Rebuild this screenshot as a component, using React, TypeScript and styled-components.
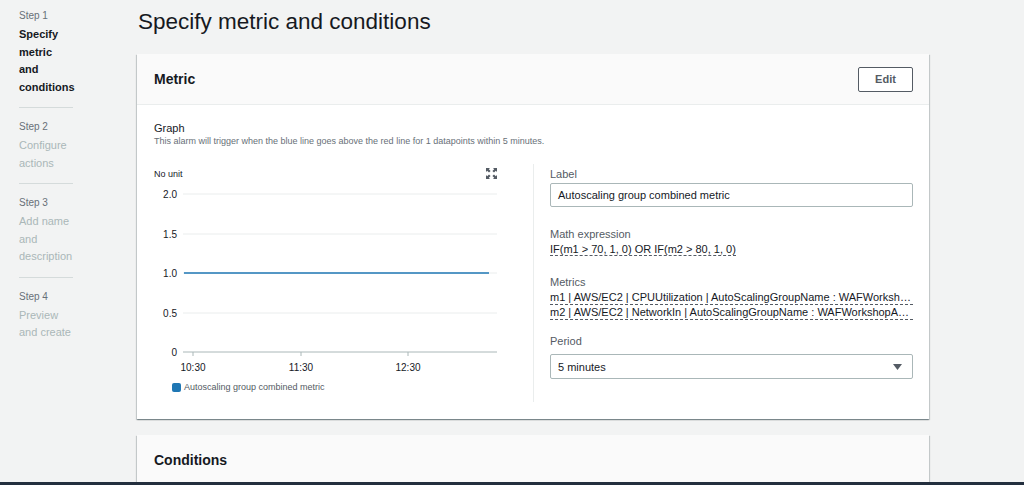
import styled, { createGlobalStyle } from 'styled-components';

const GlobalStyle = createGlobalStyle`
  html, body {
    margin: 0;
    padding: 0;
    background: #f2f3f3;
    font-family: "Liberation Sans", Arial, sans-serif;
    color: #16191f;
    overflow: hidden;
  }
`;

const Page = styled.div`
  display: flex;
  min-height: 485px;
`;

const Sidebar = styled.nav`
  width: 137px;
  flex-shrink: 0;
  box-sizing: border-box;
  padding: 9px 64px 0 19px;
`;

interface StepProps {
  $active?: boolean;
}

const StepItem = styled.div`
  padding: 0 0 11px;
  border-bottom: 1px solid #d5dbdb;
  margin-bottom: 12px;

  &:last-child {
    border-bottom: none;
  }
`;

const StepLabel = styled.div`
  font-size: 10px;
  line-height: 14px;
  color: #687078;
  margin-bottom: 3px;
`;

const StepTitle = styled.div<StepProps>`
  font-size: 11px;
  line-height: 17.5px;
  font-weight: ${props => (props.$active ? 700 : 400)};
  color: ${props => (props.$active ? '#16191f' : '#aab7b8')};
`;

const Main = styled.main`
  width: 792px;
  padding-top: 8px;
`;

const PageTitle = styled.h1`
  margin: 0 0 18px 1px;
  font-size: 22.5px;
  line-height: 28px;
  font-weight: 400;
  color: #16191f;
`;

const Card = styled.section`
  background: #fff;
  box-shadow: 0 1px 1px 0 rgba(0, 28, 36, 0.3), 1px 1px 1px 0 rgba(0, 28, 36, 0.15),
    -1px 1px 1px 0 rgba(0, 28, 36, 0.15);
  margin-bottom: 16px;
`;

const CardHeader = styled.header`
  display: flex;
  align-items: center;
  justify-content: space-between;
  height: 50px;
  padding: 0 16px 0 17px;
  background: #fafafa;
  border-bottom: 1px solid #eaeded;
`;

const CardTitle = styled.h2`
  margin: 0;
  font-size: 14px;
  font-weight: 700;
  color: #16191f;
`;

const EditButton = styled.button`
  width: 55px;
  height: 25px;
  border: 1px solid #545b64;
  border-radius: 2px;
  background: #fff;
  font-family: inherit;
  font-size: 11px;
  font-weight: 700;
  color: #545b64;
`;

const CardBody = styled.div`
  padding: 16px 16px 17px 17px;
`;

const SectionLabel = styled.div`
  font-size: 11px;
  line-height: 14px;
  color: #16191f;
`;

const SectionHint = styled.div`
  font-size: 9px;
  line-height: 13px;
  color: #687078;
`;

const Columns = styled.div`
  display: grid;
  grid-template-columns: minmax(0, 1fr) 1px minmax(0, 1fr);
  margin-top: 16px;
`;

const Divider = styled.div`
  background: #eaeded;
`;

const GraphColumn = styled.div`
  padding-right: 16px;
  padding-bottom: 10px;
`;

const GraphTop = styled.div`
  display: flex;
  align-items: center;
  justify-content: space-between;
  padding: 4px 20px 0 0;
  margin-bottom: 5px;
  font-size: 9px;
  color: #16191f;
`;

const Legend = styled.div`
  display: flex;
  align-items: center;
  gap: 3px;
  margin: 6px 0 0 18px;
  font-size: 9px;
  color: #545b64;
`;

const LegendSwatch = styled.span`
  width: 9px;
  height: 9px;
  border-radius: 2px;
  background: #1f77b4;
`;

const FieldsColumn = styled.div`
  padding-left: 16px;
`;

interface FieldProps {
  $gap?: number;
}

const Field = styled.div<FieldProps>`
  display: flow-root;
  padding-bottom: ${props => props.$gap ?? 15}px;
`;

const FieldLabel = styled.div`
  font-size: 11px;
  line-height: 14px;
  color: #545b64;
  margin: 3px 0 1px;
`;

const TextInput = styled.div`
  height: 24px;
  margin-top: 2px;
  box-sizing: border-box;
  border: 1px solid #aab7b8;
  border-radius: 2px;
  padding: 0 7px;
  display: flex;
  align-items: center;
  font-size: 11px;
  color: #16191f;
`;

const Select = styled(TextInput)`
  height: 25px;
  margin-top: 6px;
  justify-content: space-between;
  padding-right: 10px;
`;

const DottedValue = styled.div`
  font-size: 11px;
  line-height: 15px;
  color: #16191f;
  white-space: nowrap;
  overflow: hidden;
  text-overflow: ellipsis;

  span {
    border-bottom: 1px dashed #545b64;
  }
`;

const MetricLine = styled(DottedValue)`
  border-bottom: 1px dashed #545b64;
  line-height: 14px;
`;

const BottomBar = styled.div`
  position: fixed;
  left: 0;
  right: 0;
  bottom: 0;
  height: 3px;
  background: #232f3e;
`;

const steps = [
  { label: 'Step 1', title: 'Specify metric and conditions', active: true },
  { label: 'Step 2', title: 'Configure actions' },
  { label: 'Step 3', title: 'Add name and description' },
  { label: 'Step 4', title: 'Preview and create' },
];

const yTicks = [
  { label: '2.0', y: 10 },
  { label: '1.5', y: 50 },
  { label: '1.0', y: 89 },
  { label: '0.5', y: 129 },
  { label: '0', y: 168 },
];

const xTicks = [
  { label: '10:30', x: 39 },
  { label: '11:30', x: 147 },
  { label: '12:30', x: 254 },
];

function ExpandIcon(): JSX.Element {
  return (
    <svg width="11" height="11" viewBox="0 0 11 11" fill="#545b64">
      <path d="M0 0h4L2.8 1.2 4.6 3 3 4.6 1.2 2.8 0 4z" />
      <path d="M11 0v4L9.8 2.8 8 4.6 6.4 3 8.2 1.2 7 0z" />
      <path d="M0 11V7l1.2 1.2L3 6.4 4.6 8 2.8 9.8 4 11z" />
      <path d="M11 11H7l1.2-1.2L6.4 8 8 6.4l1.8 1.8L11 7z" />
    </svg>
  );
}

function Chart(): JSX.Element {
  return (
    <svg width="350" height="192" viewBox="0 0 350 192" style={{ display: 'block' }}>
      {yTicks.map(t => (
        <g key={t.label}>
          <line x1="29" x2="343" y1={t.y} y2={t.y} stroke={t.y === 168 ? '#aab7b8' : '#eaeded'} strokeWidth="1" />
          <text x="23" y={t.y + 3.5} fontSize="10" textAnchor="end" fill="#16191f" fontFamily="Liberation Sans, Arial, sans-serif">
            {t.label}
          </text>
        </g>
      ))}
      <line x1="30" x2="335" y1="89" y2="89" stroke="#1f77b4" strokeWidth="1.3" />
      {xTicks.map(t => (
        <g key={t.label}>
          <line x1={t.x} x2={t.x} y1="168" y2="172" stroke="#aab7b8" />
          <text x={t.x} y="187" fontSize="10" textAnchor="middle" fill="#16191f" fontFamily="Liberation Sans, Arial, sans-serif">
            {t.label}
          </text>
        </g>
      ))}
    </svg>
  );
}

function App(): JSX.Element {
  return (
    <>
      <GlobalStyle />
      <Page>
        <Sidebar>
          {steps.map(step => (
            <StepItem key={step.label}>
              <StepLabel>{step.label}</StepLabel>
              <StepTitle $active={step.active}>{step.title}</StepTitle>
            </StepItem>
          ))}
        </Sidebar>
        <Main>
          <PageTitle>Specify metric and conditions</PageTitle>
          <Card>
            <CardHeader>
              <CardTitle>Metric</CardTitle>
              <EditButton>Edit</EditButton>
            </CardHeader>
            <CardBody>
              <SectionLabel>Graph</SectionLabel>
              <SectionHint>
                This alarm will trigger when the blue line goes above the red line for 1 datapoints within 5 minutes.
              </SectionHint>
              <Columns>
                <GraphColumn>
                  <GraphTop>
                    <span>No unit</span>
                    <ExpandIcon />
                  </GraphTop>
                  <Chart />
                  <Legend>
                    <LegendSwatch />
                    Autoscaling group combined metric
                  </Legend>
                </GraphColumn>
                <Divider />
                <FieldsColumn>
                  <Field $gap={17}>
                    <FieldLabel>Label</FieldLabel>
                    <TextInput>Autoscaling group combined metric</TextInput>
                  </Field>
                  <Field>
                    <FieldLabel>Math expression</FieldLabel>
                    <DottedValue>
                      <span>IF(m1 &gt; 70, 1, 0) OR IF(m2 &gt; 80, 1, 0)</span>
                    </DottedValue>
                  </Field>
                  <Field $gap={11}>
                    <FieldLabel>Metrics</FieldLabel>
                    <MetricLine>m1 | AWS/EC2 | CPUUtilization | AutoScalingGroupName : WAFWorkshopASG-CPU</MetricLine>
                    <MetricLine>m2 | AWS/EC2 | NetworkIn | AutoScalingGroupName : WAFWorkshopASG-Network</MetricLine>
                  </Field>
                  <Field>
                    <FieldLabel>Period</FieldLabel>
                    <Select>
                      5 minutes
                      <svg width="9" height="6" viewBox="0 0 9 6">
                        <path d="M0 0h9L4.5 6z" fill="#545b64" />
                      </svg>
                    </Select>
                  </Field>
                </FieldsColumn>
              </Columns>
            </CardBody>
          </Card>
          <Card>
            <CardHeader>
              <CardTitle>Conditions</CardTitle>
            </CardHeader>
          </Card>
        </Main>
      </Page>
      <BottomBar />
    </>
  );
}

export default App;
